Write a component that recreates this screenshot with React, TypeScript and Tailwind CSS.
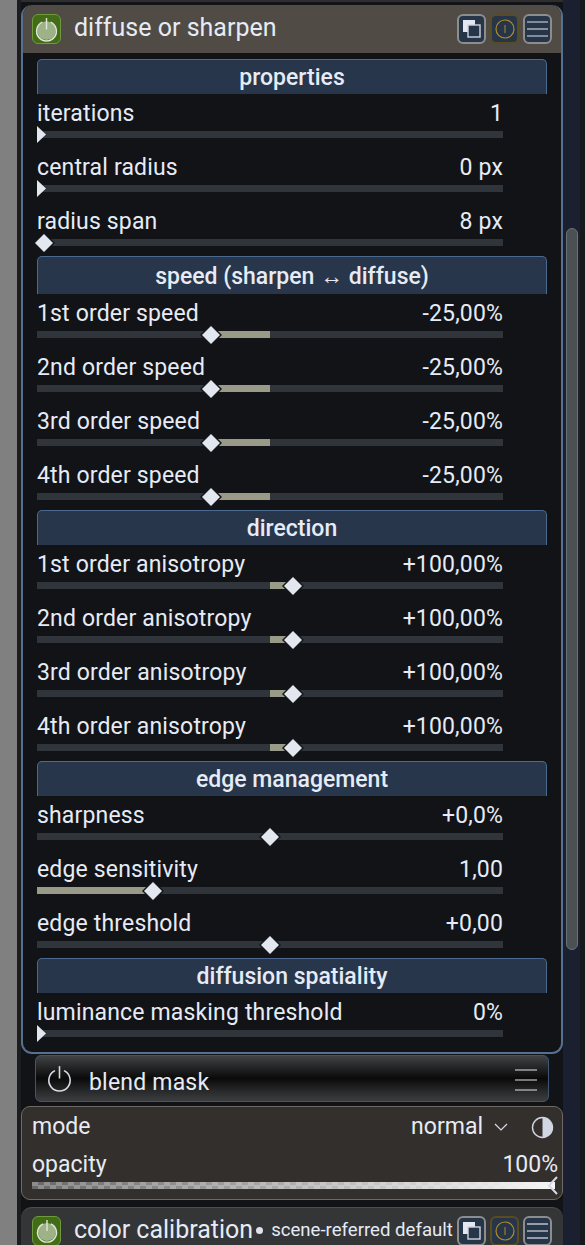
const FONT = "font-['Roboto',sans-serif]";

interface SliderRowProps {
  label: string;
  value: string;
  handle: number;
  fillFrom?: number;
  triangle?: boolean;
}

function PowerIcon({ color, size, fill }: { color: string; size: number; fill?: string }) {
  return (
    <svg width={size} height={size} viewBox="0 0 24 24" fill="none">
      {fill && <circle cx="12" cy="13" r="9" fill={fill} />}
      <path d="M8 5 A 9.5 9.5 0 1 0 16 5" stroke={color} strokeWidth="1.4" />
      <path d="M12 1 V12" stroke={color} strokeWidth="1.4" />
    </svg>
  );
}

function HeaderButtons() {
  return (
    <div className="flex gap-[4px]">
      <div className="w-[29px] h-[30px] rounded-[6px] border-2 border-[#8b8d8e] bg-[#273549] flex items-center justify-center">
        <svg width="20" height="20" viewBox="0 0 20 20" fill="none">
          <rect x="1" y="1" width="12" height="12" fill="#e3e7f0" />
          <rect x="6" y="6" width="12" height="12" fill="#273549" stroke="#cfd5e0" strokeWidth="1.4" />
        </svg>
      </div>
      <div className="w-[29px] h-[30px] rounded-[6px] border-2 border-[#5a4c22] bg-[#273549] flex items-center justify-center">
        <svg width="20" height="20" viewBox="0 0 20 20" fill="none">
          <circle cx="10" cy="10" r="9" stroke="#b08a2a" strokeWidth="1.2" />
          <path d="M10 6 V14" stroke="#b08a2a" strokeWidth="1" />
        </svg>
      </div>
      <div className="w-[29px] h-[30px] rounded-[6px] border-2 border-[#8b8d8e] bg-[#273549] flex items-center justify-center">
        <svg width="22" height="18" viewBox="0 0 22 18" fill="none">
          <path d="M0 2 H21" stroke="#dfe3ec" strokeWidth="1.2" />
          <path d="M0 9 H21" stroke="#aab0ba" strokeWidth="1.6" />
          <path d="M0 16 H21" stroke="#dfe3ec" strokeWidth="1.2" />
        </svg>
      </div>
    </div>
  );
}

function GreenToggle({ size }: { size: number }) {
  return (
    <div className="w-[29px] h-[30px] rounded-[6px] border border-[#6d9a3a] bg-[#436c19] flex items-center justify-center">
      <PowerIcon color="#dfe6d6" size={size} fill="#9db287" />
    </div>
  );
}

function SectionHeader({ title, tall }: { title: string; tall?: boolean }) {
  return (
    <div
      className={`${tall ? 'h-[38px]' : 'h-[35px]'} pt-[3px] rounded-t-[5px] border-t border-x border-[#4b6a8f] bg-[#27364b] flex items-center justify-center text-[23px] font-medium text-[#e6ebf5]`}
    >
      {title}
    </div>
  );
}

function SliderRow({ label, value, handle, fillFrom, triangle }: Readonly<SliderRowProps>) {
  // handle and fillFrom are x positions inside the 466px track
  const fillLeft = fillFrom === undefined ? 0 : Math.min(fillFrom, handle);
  const fillWidth = fillFrom === undefined ? 0 : Math.abs(handle - fillFrom);

  return (
    <div className="w-[466px]">
      <div className="h-[37px] pt-[3px] flex items-center justify-between text-[23px] tracking-[0.16px] text-[#e6ebf5]">
        <span>{label}</span>
        <span>{value}</span>
      </div>
      <div className="relative h-[7px] bg-[#30353b]">
        {fillWidth > 0 && (
          <div className="absolute top-0 h-[7px] bg-[#9a9a88]" style={{ left: fillLeft, width: fillWidth }} />
        )}
        {triangle ? (
          <svg className="absolute left-0 top-[-5px]" width="10" height="17" viewBox="0 0 10 17">
            <path d="M0 0 L9 8.5 L0 17 Z" fill="#e3e7f0" />
          </svg>
        ) : (
          <svg className="absolute top-[-7.5px]" style={{ left: handle - 11 }} width="22" height="22" viewBox="0 0 22 22">
            <path d="M11 0 L22 11 L11 22 L0 11 Z" fill="#14161a" />
            <path d="M11 2 L20 11 L11 20 L2 11 Z" fill="#e3e7f0" />
          </svg>
        )}
      </div>
    </div>
  );
}

function Section({ title, tall, children }: { title: string; tall?: boolean; children: React.ReactNode }) {
  return (
    <div>
      <SectionHeader title={title} tall={tall} />
      <div className="flex flex-col gap-[10px]">{children}</div>
    </div>
  );
}

export default function App() {
  return (
    <div className={`${FONT} w-[585px] h-[1245px] overflow-hidden flex bg-[#121317]`}>
      <div className="w-[17px] bg-[#808080] shrink-0" />
      <div className="w-[4px] bg-[#1b1d20] shrink-0" />

      <div className="w-[542px] shrink-0 flex flex-col">
        <div className="h-[2px] shrink-0 bg-[#2e2e2e]" />
        <div className="h-[3px] shrink-0" />

        {/* diffuse or sharpen module */}
        <div className="h-[1049px] shrink-0 rounded-[11px] border-x-2 border-b-2 border-[#56708f] bg-[#121317] box-border overflow-hidden">
          <div className="h-[48px] -mx-[2px] bg-[#504c45] rounded-t-[11px] flex items-center justify-between pl-[11px] pr-[11px]">
            <div className="flex items-center gap-[13px]">
              <GreenToggle size={25} />
              <span className="mb-[2px] text-[25px] text-[#e6ebf5]">diffuse or sharpen</span>
            </div>
            <HeaderButtons />
          </div>

          <div className="pl-[14px] pr-[14px] pt-[6px] flex flex-col gap-[10px]">
            <Section title="properties">
              <SliderRow label="iterations" value="1" handle={0} triangle />
              <SliderRow label="central radius" value="0 px" handle={0} triangle />
              <SliderRow label="radius span" value="8 px" handle={7} />
            </Section>
            <Section title="speed (sharpen ↔ diffuse)" tall>
              <SliderRow label="1st order speed" value="-25,00%" handle={174} fillFrom={233} />
              <SliderRow label="2nd order speed" value="-25,00%" handle={174} fillFrom={233} />
              <SliderRow label="3rd order speed" value="-25,00%" handle={174} fillFrom={233} />
              <SliderRow label="4th order speed" value="-25,00%" handle={174} fillFrom={233} />
            </Section>
            <Section title="direction">
              <SliderRow label="1st order anisotropy" value="+100,00%" handle={256} fillFrom={233} />
              <SliderRow label="2nd order anisotropy" value="+100,00%" handle={256} fillFrom={233} />
              <SliderRow label="3rd order anisotropy" value="+100,00%" handle={256} fillFrom={233} />
              <SliderRow label="4th order anisotropy" value="+100,00%" handle={256} fillFrom={233} />
            </Section>
            <Section title="edge management">
              <SliderRow label="sharpness" value="+0,0%" handle={233} />
              <SliderRow label="edge sensitivity" value="1,00" handle={116} fillFrom={0} />
              <SliderRow label="edge threshold" value="+0,00" handle={233} />
            </Section>
            <Section title="diffusion spatiality">
              <SliderRow label="luminance masking threshold" value="0%" handle={0} triangle />
            </Section>
          </div>
        </div>

        {/* blend mask bar */}
        <div className="mt-px shrink-0 ml-[14px] w-[514px] h-[47px] rounded-[6px] border border-[#3f5672] bg-[linear-gradient(to_bottom,#424345_0%,#2a2b2c_20%,#0a0a0a_50%,#2a2b2c_80%,#3c3d3f_100%)] flex items-center justify-between pl-[10px] pr-[11px]">
          <div className="flex items-center gap-[16px]">
            <PowerIcon color="#d8dce2" size={27} />
            <span className="mt-[9px] text-[23px] tracking-[0.2px] text-[#e6ebf5]">blend mask</span>
          </div>
          <svg className="mt-[3px]" width="22" height="22" viewBox="0 0 22 22" fill="none">
            <path d="M0 1 H22 M0 11 H22 M0 21 H22" stroke="#dfe3ec" strokeWidth="1.2" />
          </svg>
        </div>

        {/* blend options */}
        <div className="mt-[4px] shrink-0 h-[94px] rounded-[9px] border border-[#6f6a63] bg-[#332f2c] px-[10px] text-[23px] text-[#e6ebf5]">
          <div className="h-[40px] flex items-center justify-between">
            <span>mode</span>
            <div className="flex items-center">
              <span>normal</span>
              <svg className="ml-[11px]" width="14" height="9" viewBox="0 0 14 9" fill="none">
                <path d="M1 1 L7 7 L13 1" stroke="#d8dce2" strokeWidth="1.2" />
              </svg>
              <svg className="ml-[23px] mr-[-2px]" width="23" height="23" viewBox="0 0 23 23">
                <circle cx="11.5" cy="11.5" r="10" fill="none" stroke="#d0d6e2" strokeWidth="1.4" />
                <path d="M11.5 1.5 A 10 10 0 0 1 11.5 21.5 Z" fill="#d0d6e2" />
              </svg>
            </div>
          </div>
          <div className="h-[35px] pt-[2px] flex items-center justify-between">
            <span>opacity</span>
            <span className="mr-[-6px]">100%</span>
          </div>
          <div className="relative h-[7px] w-[523px] bg-[repeating-conic-gradient(#686868_0%_25%,#8c8c8c_0%_50%)] bg-[length:12px_7px]">
            <div className="h-full bg-[linear-gradient(to_right,rgba(245,245,245,0),rgba(245,245,245,1))]" />
            <svg className="absolute right-[-3px] top-[-6px]" width="11" height="19" viewBox="0 0 11 19" fill="none">
              <path d="M10 1 L2 9.5 L10 18" stroke="#d8dce2" strokeWidth="2" />
            </svg>
          </div>
        </div>

        {/* color calibration module */}
        <div className="mt-[7px] shrink-0 h-[60px] rounded-t-[11px] bg-[#333537] border-t border-[#4a4c4e] pt-[8px] flex justify-between pl-[11px] pr-[11px]">
          <div className="flex gap-[13px] h-[30px] items-center whitespace-nowrap">
            <GreenToggle size={24} />
            <span className="mb-[2px] text-[25px] text-[#e6ebf5]">color calibration</span>
            <span className="ml-[-10px] text-[18.6px] text-[#e6ebf5] flex items-center">
              <span className="w-[7px] h-[7px] rounded-full bg-[#dfe3ec] mr-[8px]" />
              scene-referred default
            </span>
          </div>
          <HeaderButtons />
        </div>
      </div>

      {/* scrollbar gutter */}
      <div className="w-[22px] shrink-0 flex">
        <div className="w-[17px] bg-[#1a2030] relative">
          <div className="absolute left-[3px] top-[228px] w-[12px] h-[722px] rounded-full border border-[#6b7178] bg-[#4b5053]" />
        </div>
        <div className="w-[5px] bg-[#17181b]" />
      </div>
    </div>
  );
}
